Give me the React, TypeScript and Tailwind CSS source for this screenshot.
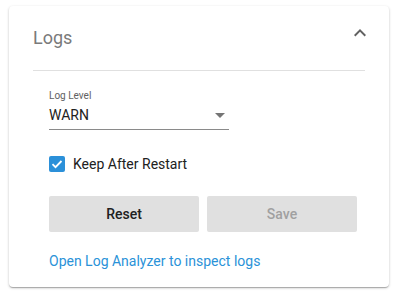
import React from 'react'

function ChevronUp() {
  return (
    <svg width="24" height="24" viewBox="0 0 24 24" className="-mt-[5px] -mr-[7px]">
      <path d="M12 8l-6 6 1.41 1.41L12 10.83l4.59 4.58L18 14z" fill="#616161" />
    </svg>
  )
}

function CheckIcon() {
  return (
    <svg width="16" height="16" viewBox="0 0 16 16">
      <path d="M3.5 8.2l3 3 6-6.2" stroke="#fff" strokeWidth="1.8" fill="none" />
    </svg>
  )
}

export default function App() {
  return (
    <div className="w-[400px] h-[295px] bg-white pt-[6px] pl-[9px] font-['Roboto',sans-serif]">
      <div className="w-[380px] h-[281px] bg-white rounded-[4px] shadow-[0_1px_3px_rgba(0,0,0,0.2),0_1px_1px_rgba(0,0,0,0.14),0_2px_1px_-1px_rgba(0,0,0,0.12)] px-[24px] pt-[20px]">
        <div className="flex items-start justify-between">
          <h2 className="text-[18px] leading-[24px] text-[#7a7a7a]">Logs</h2>
          <ChevronUp />
        </div>
        <div className="mt-[20px] h-px bg-[#e0e0e0]" />

        <div className="pl-[16px] pr-[8px]">
          <div className="mt-[19px] w-[180px]">
            <div className="text-[10px] leading-[12px] text-[#616161]">Log Level</div>
            <div className="flex items-center justify-between pt-[3px] pb-[4px] border-b border-[#8a8a8a]">
              <span className="text-[14px] leading-[20px] text-[#212121]">WARN</span>
              <svg width="10" height="5" viewBox="0 0 10 5" className="mr-[4px]">
                <path d="M0 0h10L5 5z" fill="#757575" />
              </svg>
            </div>
          </div>

          <label className="mt-[24px] flex items-center gap-[8px]">
            <span className="w-[16px] h-[16px] rounded-[2px] bg-[#2b90d9] flex items-center justify-center">
              <CheckIcon />
            </span>
            <span className="text-[14px] leading-[20px] text-[#212121]">Keep After Restart</span>
          </label>

          <div className="mt-[22px] flex gap-[8px]">
            <button className="w-[150px] h-[36px] bg-[#e0e0e0] rounded-[2px] text-[14px] font-medium text-[#212121]">
              Reset
            </button>
            <button className="w-[150px] h-[36px] bg-[#e0e0e0] rounded-[2px] text-[14px] font-medium text-[#a0a0a0]" disabled>
              Save
            </button>
          </div>

          <a className="mt-[19px] block text-[14px] leading-[20px] text-[#2a92d8]">
            Open Log Analyzer to inspect logs
          </a>
        </div>
      </div>
    </div>
  )
}
